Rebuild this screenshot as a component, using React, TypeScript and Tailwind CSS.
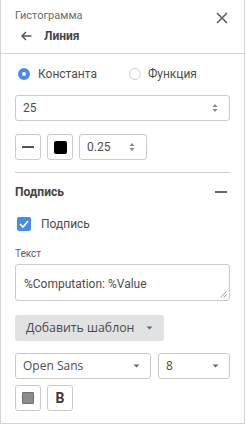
import React from "react";

function Spinner() {
  return (
    <svg width="6" height="10" viewBox="0 0 6 10" className="text-[#888]">
      <path d="M3 1 L5.5 4 H0.5 Z" fill="currentColor" />
      <path d="M3 9 L5.5 6 H0.5 Z" fill="currentColor" />
    </svg>
  );
}

function Caret() {
  return (
    <svg width="7" height="4" viewBox="0 0 7 4" className="text-[#666]">
      <path d="M0.5 0.5 H6.5 L3.5 3.5 Z" fill="currentColor" />
    </svg>
  );
}

export default function App() {
  const box = "border border-[#cbcbcb] rounded-[3px] bg-white";
  return (
    <div className="w-[245px] h-[424px] bg-white border-l border-r border-b border-[#d4d4d4] font-['Roboto',sans-serif] text-[#4d4d4d]">
      {/* header */}
      <div className="px-[14px] pt-[9px] pb-[7px] border-b border-[#d4d4d4]">
        <div className="flex items-center justify-between h-[14px]">
          <span className="text-[11px] text-[#6b6b6b]">Гистограмма</span>
          <svg width="12" height="12" viewBox="0 0 12 12" className="mr-[2px] mt-[3px]">
            <path d="M1 1 L11 11 M11 1 L1 11" stroke="#5a5a5a" strokeWidth="1.5" />
          </svg>
        </div>
        <div className="flex items-center h-[20px] mt-[3px]">
          <svg width="11" height="10" viewBox="0 0 11 10" className="ml-[6px]">
            <path d="M10.5 5 H1.5 M5 1 L1 5 L5 9" stroke="#555" strokeWidth="1.5" fill="none" />
          </svg>
          <span className="ml-[12px] text-[12px] font-bold text-[#444]">Линия</span>
        </div>
      </div>

      <div className="px-[14px]">
        {/* radios */}
        <div className="flex items-center h-[20px] mt-[10px]">
          <span className="ml-[3px] w-[12px] h-[12px] rounded-full border-[4px] border-[#4a8ae8] bg-white" />
          <span className="ml-[8px] text-[12px]">Константа</span>
          <span className="ml-[32px] w-[12px] h-[12px] rounded-full border border-[#d0d0d0] bg-white" />
          <span className="ml-[7px] text-[12px]">Функция</span>
        </div>

        <div className={`${box} mt-[11px] h-[26px] flex items-center justify-between pl-[7px] pr-[11px]`}>
          <span className="text-[12px]">25</span>
          <Spinner />
        </div>

        <div className="flex mt-[13px] gap-[6px] h-[26px]">
          <div className={`${box} w-[26px] flex items-center justify-center`}>
            <span className="w-[12px] h-[2px] bg-[#555]" />
          </div>
          <div className={`${box} w-[26px] flex items-center justify-center`}>
            <span className="w-[13px] h-[13px] bg-black rounded-[2px]" />
          </div>
          <div className={`${box} w-[68px] flex items-center justify-between pl-[7px] pr-[11px]`}>
            <span className="text-[12px]">0.25</span>
            <Spinner />
          </div>
        </div>

        <div className="mt-[12px] border-t border-[#cbcbcb]" />

        <div className="flex items-center justify-between h-[20px] mt-[9px]">
          <span className="text-[12px] font-bold text-[#444]">Подпись</span>
          <span className="w-[12px] h-[1.5px] bg-[#666] mr-[3px]" />
        </div>

        <div className="flex items-center h-[20px] mt-[12px]">
          <span className="ml-[2px] w-[14px] h-[14px] rounded-[2px] bg-[#4a8ae8] flex items-center justify-center">
            <svg width="10" height="8" viewBox="0 0 10 8">
              <path d="M1 4 L4 7 L9 1" stroke="white" strokeWidth="1.7" fill="none" />
            </svg>
          </span>
          <span className="ml-[10px] text-[12px]">Подпись</span>
        </div>

        <div className="h-[14px] mt-[12px] flex items-center text-[10px] text-[#5a5a5a]">Текст</div>

        <div className={`${box} mt-[4px] h-[37px] relative pl-[8px] pt-[6px]`}>
          <span className="text-[12px]">%Computation: %Value</span>
          <svg width="7" height="7" viewBox="0 0 7 7" className="absolute right-[2px] bottom-[2px]">
            <path d="M6.5 0.5 L0.5 6.5 M6.5 3.5 L3.5 6.5" stroke="#888" strokeWidth="0.8" />
          </svg>
        </div>

        <div className="mt-[14px] w-[149px] h-[26px] rounded-[3px] bg-[#e1e2e4] flex items-center pl-[11px] font-['Open_Sans',sans-serif]">
          <span className="text-[12.3px] text-[#4a4a4a]">Добавить шаблон</span>
          <span className="ml-[12px] mb-[1px]"><Caret /></span>
        </div>

        <div className="flex mt-[12px] gap-[7px] h-[26px] font-['Open_Sans',sans-serif]">
          <div className={`${box} w-[136px] flex items-center justify-between pl-[7px] pr-[10px]`}>
            <span className="text-[12px]">Open Sans</span>
            <Caret />
          </div>
          <div className={`${box} flex-1 flex items-center justify-between pl-[7px] pr-[10px]`}>
            <span className="text-[12px]">8</span>
            <Caret />
          </div>
        </div>

        <div className="flex mt-[6px] gap-[6px] h-[26px]">
          <div className={`${box} w-[26px] flex items-center justify-center`}>
            <span className="w-[12px] h-[12px] bg-[#8c8c8c] border border-[#6e6e6e] rounded-[1px]" />
          </div>
          <div className={`${box} w-[26px] flex items-center justify-center`}>
            <span className="text-[14px] font-bold text-[#3a3a3a] leading-none">B</span>
          </div>
        </div>
      </div>
    </div>
  );
}
